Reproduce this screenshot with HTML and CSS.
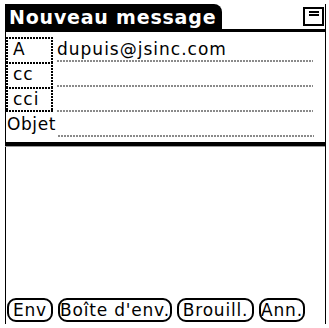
FILE: index.html
```html
<!DOCTYPE html>
<html lang="fr">
<head>
<meta charset="utf-8">
<link rel="stylesheet" href="styles.css">
</head>
<body>
<div class="screen">
  <div class="titlebar">
    <div class="tab">Nouveau message</div>
    <div class="menu-icon"></div>
  </div>
  <div class="form">
    <div class="row">
      <div class="lbl">A</div>
      <div class="field">dupuis@jsinc.com</div>
    </div>
    <div class="row">
      <div class="lbl">cc</div>
      <div class="field"></div>
    </div>
    <div class="row">
      <div class="lbl last">cci</div>
      <div class="field"></div>
    </div>
    <div class="row">
      <div class="plain">Objet</div>
      <div class="field"></div>
    </div>
  </div>
  <div class="rule"></div>
  <div class="body"></div>
  <div class="buttons">
    <div class="btn w-env">Env</div>
    <div class="btn w-box">Boîte d'env.</div>
    <div class="btn w-dr">Brouill.</div>
    <div class="btn w-ann">Ann.</div>
  </div>
</div>
</body>
</html>
```

FILE: styles.css
```css
html, body {
  margin: 0;
  padding: 0;
  background: #fff;
}
body {
  width: 329px;
  height: 328px;
  overflow: hidden;
  font-family: "DejaVu Sans", "Liberation Sans", sans-serif;
  color: #000;
}
.screen {
  box-sizing: border-box;
  margin: 4px 0 0 5px;
  width: 321px;
  height: 320px;
  border-left: 1px solid #000;
  border-right: 1px solid #000;
  display: flex;
  flex-direction: column;
}
.titlebar {
  display: flex;
  height: 25px;
  border-bottom: 3px solid #000;
  margin-left: -1px;
}
.tab {
  width: 217px;
  background: #000;
  color: #fff;
  border-top-right-radius: 8px;
  font-weight: bold;
  font-size: 19px;
  letter-spacing: 0.8px;
  line-height: 26px;
  padding-left: 4px;
  box-sizing: border-box;
  white-space: nowrap;
}
.menu-icon {
  margin-left: auto;
  margin-right: 1px;
  margin-top: 3px;
  width: 21px;
  height: 19px;
  box-sizing: border-box;
  border: 2px solid #000;
}
.menu-icon::before {
  content: "";
  display: block;
  margin: 2px 0 0 4px;
  width: 10px;
  height: 1px;
  border-top: 2px solid #000;
  border-bottom: 2px solid #000;
}
.form {
  margin-top: 5px;
  font-size: 17px;
  letter-spacing: 1px;
}
.row {
  display: flex;
  height: 25px;
  line-height: 25px;
}
.lbl {
  box-sizing: border-box;
  width: 47px;
  padding-left: 7px;
  margin-right: 4px;
  background:
    repeating-linear-gradient(to right, #000 0 2px, transparent 2px 3px) left top / 100% 2px no-repeat,
    repeating-linear-gradient(to bottom, #000 0 2px, transparent 2px 3px) left top / 2px 100% no-repeat,
    repeating-linear-gradient(to bottom, #000 0 2px, transparent 2px 3px) right top / 2px 100% no-repeat;
}
.lbl.last {
  background:
    repeating-linear-gradient(to right, #000 0 2px, transparent 2px 3px) left top / 100% 2px no-repeat,
    repeating-linear-gradient(to right, #000 0 2px, transparent 2px 3px) left bottom / 100% 2px no-repeat,
    repeating-linear-gradient(to bottom, #000 0 2px, transparent 2px 3px) left top / 2px 100% no-repeat,
    repeating-linear-gradient(to bottom, #000 0 2px, transparent 2px 3px) right top / 2px 100% no-repeat;
}
.plain {
  width: 51px;
  margin-left: 1px;
  letter-spacing: 0.6px;
}
.field {
  width: 256px;
  white-space: nowrap;
  background: repeating-linear-gradient(to right, #8a8a8a 0 2px, transparent 2px 3px) left bottom / 100% 2px no-repeat;
}
.rule {
  margin-top: 5px;
  margin-left: -1px;
  height: 4px;
  background: #000;
  border-bottom: 1px solid #9a9a9a;
}
.body {
  flex: 1;
}
.buttons {
  display: flex;
  gap: 5px;
  padding-left: 1px;
  margin-bottom: 2px;
  font-size: 17px;
  letter-spacing: 0.8px;
}
.btn {
  box-sizing: border-box;
  height: 24px;
  line-height: 20px;
  border: 2px solid #000;
  border-radius: 9px;
  text-align: center;
  white-space: nowrap;
}
.w-env { width: 46px; }
.w-box { width: 114px; }
.w-dr { width: 77px; }
.w-ann { width: 46px; }
```
